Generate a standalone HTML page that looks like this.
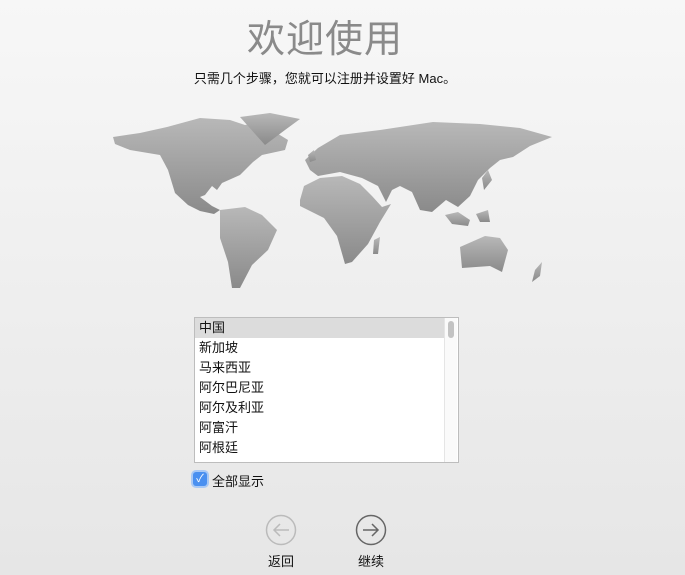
<!DOCTYPE html>
<html><head><meta charset="utf-8"><style>
body{margin:0;width:685px;height:575px;overflow:hidden;background:linear-gradient(#f7f7f7,#e6e6e6);font-family:"Liberation Sans","Noto Sans CJK SC",sans-serif;position:relative}
.t{position:absolute;left:0;width:650px;text-align:center;top:8px;font-size:38px;color:#8a8a8a;letter-spacing:1px}
.s{position:absolute;left:0;width:650px;text-align:center;top:68px;font-size:13px;color:#111}
.list{position:absolute;left:194px;top:317px;width:263px;height:144px;background:#fff;border:1px solid #bdbdbd}
.row{height:20px;line-height:20px;font-size:13px;padding-left:4px;color:#111}
.sel{background:#dcdcdc;margin-right:13px}
.sb{position:absolute;right:1px;top:0;width:12px;height:144px;background:#fafafa;border-left:1px solid #e5e5e5}
.th{position:absolute;left:3px;top:3px;width:6px;height:17px;border-radius:3px;background:#c3c3c3}
.cb{position:absolute;left:193px;top:472px;width:14px;height:14px;border-radius:3px;background:#4a90f0;box-shadow:0 0 0 2px #a9c9f5;color:#fff;font-size:11px;text-align:center;line-height:14px}
.cl{position:absolute;left:212px;top:471px;font-size:13px;color:#111}
.lbl{position:absolute;top:551px;font-size:13px;color:#111}
</style></head><body>
<div class="t">欢迎使用</div>
<div class="s">只需几个步骤，您就可以注册并设置好 Mac。</div>
<svg style="position:absolute;left:0;top:0" width="685" height="300">
<defs><linearGradient id="g" x1="0" y1="0" x2="0" y2="1"><stop offset="0" stop-color="#b8b8b8"/><stop offset="1" stop-color="#8a8a8a"/></linearGradient></defs>
<g fill="url(#g)">
<polygon points="113,137 140,133 167,127 200,118 230,120 245,125 262,122 275,132 288,140 285,150 262,155 253,162 240,175 222,183 217,190 212,186 205,195 200,197 212,206 220,210 214,214 200,211 188,205 175,193 168,170 160,155 130,150 115,144"/>
<polygon points="240,117 270,113 300,119 285,130 265,145 256,135"/>
<polygon points="220,210 245,207 262,215 277,230 268,250 252,265 240,288 232,288 228,262 220,238"/>
<polygon points="310,170 305,160 318,148 340,135 380,130 433,122 480,124 520,128 552,137 530,146 513,157 500,160 490,168 478,180 470,196 458,207 446,200 432,212 420,210 412,192 400,186 392,190 386,202 378,186 362,178 340,172 318,176"/>
<polygon points="300,200 304,186 320,178 342,176 360,184 372,196 382,207 391,204 380,222 368,244 352,262 345,264 337,236 324,218 300,206"/>
<polygon points="460,247 485,236 500,238 508,250 502,272 490,266 462,268"/>
<polygon points="374,240 380,237 378,254 373,254"/>
<polygon points="445,215 458,212 470,220 468,226 452,224"/>
<polygon points="476,214 488,210 490,222 480,222"/>
<polygon points="482,178 488,170 492,180 484,190"/>
<polygon points="308,155 314,150 316,160 310,162"/>
<polygon points="535,270 542,262 540,276 532,282"/>
</g></svg>
<div class="list">
<div class="row sel">中国</div><div class="row">新加坡</div><div class="row">马来西亚</div><div class="row">阿尔巴尼亚</div><div class="row">阿尔及利亚</div><div class="row">阿富汗</div><div class="row">阿根廷</div>
<div class="sb"><div class="th"></div></div>
</div>
<div class="cb">✓</div><div class="cl">全部显示</div>
<svg style="position:absolute;left:265px;top:514px" width="32" height="32"><circle cx="16" cy="16" r="14.5" fill="none" stroke="#bbb" stroke-width="1.5"/><path d="M24 16H9M15 10l-6 6 6 6" fill="none" stroke="#bbb" stroke-width="1.5"/></svg>
<svg style="position:absolute;left:355px;top:514px" width="32" height="32"><circle cx="16" cy="16" r="14.5" fill="none" stroke="#666" stroke-width="1.5"/><path d="M8 16h15M17 10l6 6-6 6" fill="none" stroke="#666" stroke-width="1.5"/></svg>
<div class="lbl" style="left:268px">返回</div>
<div class="lbl" style="left:358px">继续</div>
</body></html>
